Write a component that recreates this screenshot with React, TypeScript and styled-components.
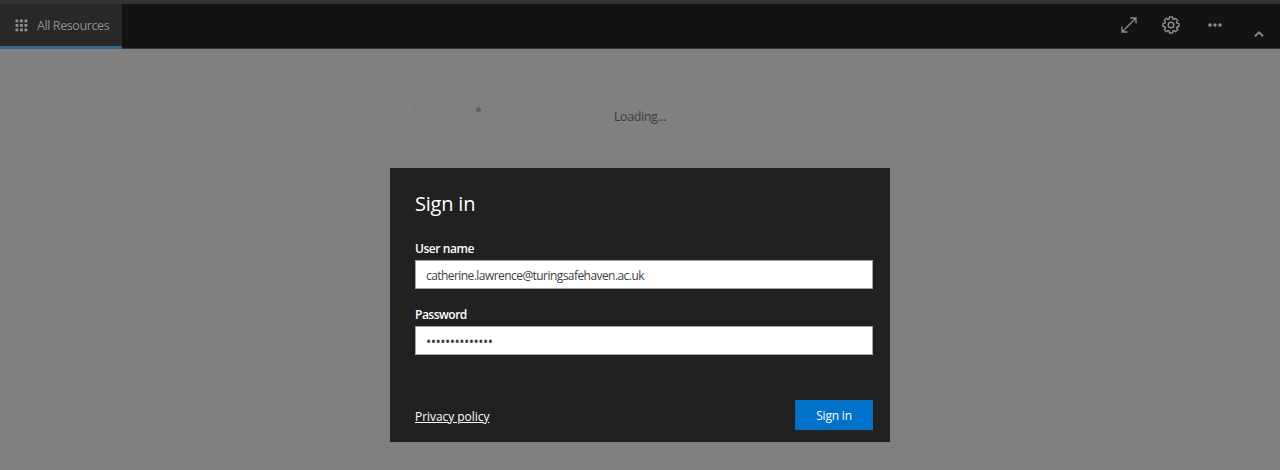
import React from 'react';
import styled, { createGlobalStyle } from 'styled-components';

const GlobalStyle = createGlobalStyle`
  * { box-sizing: border-box; }
  body { margin: 0; overflow: hidden; background: #808080; }
  body, input, button { font-family: 'Open Sans', 'Noto Sans', sans-serif; }
`;

const Page = styled.div`
  height: 470px;
  display: flex;
  flex-direction: column;
  background: #808080;
  border-top: 4px solid #2e3336;
`;

const TopBar = styled.header`
  height: 45px;
  flex: none;
  display: flex;
  justify-content: space-between;
  background: #131313;
  border-bottom: 1px solid #393939;
`;

const Tab = styled.div`
  width: 122px;
  height: 45px;
  display: flex;
  align-items: center;
  gap: 9px;
  padding-left: 15px;
  background: #282828;
  border-bottom: 3px solid #37698a;
`;

const Label = styled.span<{ $size: number; $spacing?: number; $color: string }>`
  font-size: ${p => p.$size}px;
  letter-spacing: ${p => p.$spacing ?? 0}px;
  color: ${p => p.$color};
  line-height: 18px;
  padding-top: 1px;
  white-space: nowrap;
`;

const Tools = styled.div`
  display: flex;
  align-items: center;
  padding: 0 16px 2px 0;
  svg { display: block; fill: none; stroke: #8d8d8d; }
`;

const Tool = styled.div<{ $after?: number; $drop?: number }>`
  margin-right: ${p => p.$after ?? 0}px;
  padding-top: ${p => p.$drop ?? 0}px;
`;

const Main = styled.main`
  flex: 1;
  display: flex;
  flex-direction: column;
  align-items: center;
`;

const Status = styled.div`
  width: 500px;
  height: 119px;
  padding-top: 58px;
  display: flex;
`;

const Progress = styled.div`
  width: 224px;
  padding: 0 0 0 23px;
  display: flex;
  gap: 58px;
`;

const Dot = styled.i<{ $color: string }>`
  width: 5px;
  height: 5px;
  border-radius: 50%;
  background: ${p => p.$color};
`;

const Dialog = styled.form`
  width: 500px;
  height: 274px;
  padding: 22px 17px 0 25px;
  display: flex;
  flex-direction: column;
  background: #212121;
`;

const Title = styled.h1`
  margin: 0 0 22px;
  font-size: 20px;
  line-height: 28px;
  font-weight: 400;
  letter-spacing: -0.2px;
  color: #fff;
`;

const Field = styled.label<{ $spacing: number }>`
  display: flex;
  flex-direction: column;
  height: 66px;
  color: #fff;
  font-size: 12px;
  line-height: 18px;
  font-weight: 600;
  letter-spacing: ${p => p.$spacing}px;
`;

const Input = styled.input<{ $spacing: number; $size?: number }>`
  height: 29px;
  margin: 2px 0 0;
  padding: 1px 10px 0;
  border: 1px solid #a5a5a5;
  border-radius: 0;
  outline: none;
  background: #fff;
  color: #404040;
  font-size: ${p => p.$size ?? 12}px;
  letter-spacing: ${p => p.$spacing}px;
`;

const Footer = styled.div`
  margin-top: 28px;
  display: flex;
  align-items: center;
  justify-content: space-between;
`;

const Policy = styled.a`
  padding-top: 3px;
  color: #fff;
  font-size: 12px;
  line-height: 18px;
  letter-spacing: -0.05px;
  text-decoration: underline;
`;

const Submit = styled.button`
  width: 78px;
  height: 30px;
  padding: 0;
  border: 1px solid #0a6bb8;
  background: #0072c9;
  color: #fff;
  font-size: 12px;
  letter-spacing: -0.2px;
`;

const gearPath = () => {
  const pts: string[] = [];
  for (let i = 0; i < 8; i++) {
    const a = (i * Math.PI) / 4;
    [[-0.27, 6.3], [-0.2, 8.1], [0.2, 8.1], [0.27, 6.3]].forEach(([d, r]) => {
      pts.push(`${(9 + r * Math.sin(a + d)).toFixed(2)} ${(9 - r * Math.cos(a + d)).toFixed(2)}`);
    });
  }
  return `M${pts.join('L')}Z`;
};

export default function App() {
  return (
    <>
      <GlobalStyle />
      <Page>
        <TopBar>
          <Tab>
            <svg width="13" height="13" fill="#929292">
              {[0, 1, 2].map(r => [0, 1, 2].map(c => (
                <rect key={`${r}${c}`} x={0.5 + c * 4.5} y={0.5 + r * 4.5} width="2.8" height="2.8" />
              )))}
            </svg>
            <Label $size={12.5} $spacing={-0.4} $color="#8f8f8f">All Resources</Label>
          </Tab>
          <Tools>
            <Tool $after={25}>
              <svg width="16" height="16" strokeWidth="1.3">
                <path d="M1 15L15 1M9.5 1H15V6.5M1 9.5V15H6.5" />
              </svg>
            </Tool>
            <Tool $after={28}>
              <svg width="18" height="18" strokeWidth="1.4" strokeLinejoin="round">
                <path d={gearPath()} />
                <circle cx="9" cy="9" r="2.8" />
              </svg>
            </Tool>
            <Tool $after={32}>
              <svg width="14" height="4">
                {[2, 7, 12].map(x => <circle key={x} cx={x} cy="2" r="1.8" fill="#8d8d8d" stroke="none" />)}
              </svg>
            </Tool>
            <Tool $drop={18}>
              <svg width="10" height="6" strokeWidth="1.9"><path d="M1 5.3L5 1.4L9 5.3" /></svg>
            </Tool>
          </Tools>
        </TopBar>
        <Main>
          <Status>
            <Progress>
              <Dot $color="#7c7c7c" />
              <Dot $color="#606060" />
            </Progress>
            <Label $size={12.5} $spacing={-0.4} $color="#3d3d3d">Loading...</Label>
          </Status>
          <Dialog onSubmit={e => e.preventDefault()}>
            <Title>Sign in</Title>
            <Field $spacing={-0.45}>
              User name
              <Input $spacing={-0.56} defaultValue="catherine.lawrence@turingsafehaven.ac.uk" spellCheck={false} />
            </Field>
            <Field $spacing={-0.5}>
              Password
              <Input $spacing={-0.52} $size={14} type="password" defaultValue="xxxxxxxxxxxxxx" />
            </Field>
            <Footer>
              <Policy href="#">Privacy policy</Policy>
              <Submit type="submit">Sign in</Submit>
            </Footer>
          </Dialog>
        </Main>
      </Page>
    </>
  );
}
